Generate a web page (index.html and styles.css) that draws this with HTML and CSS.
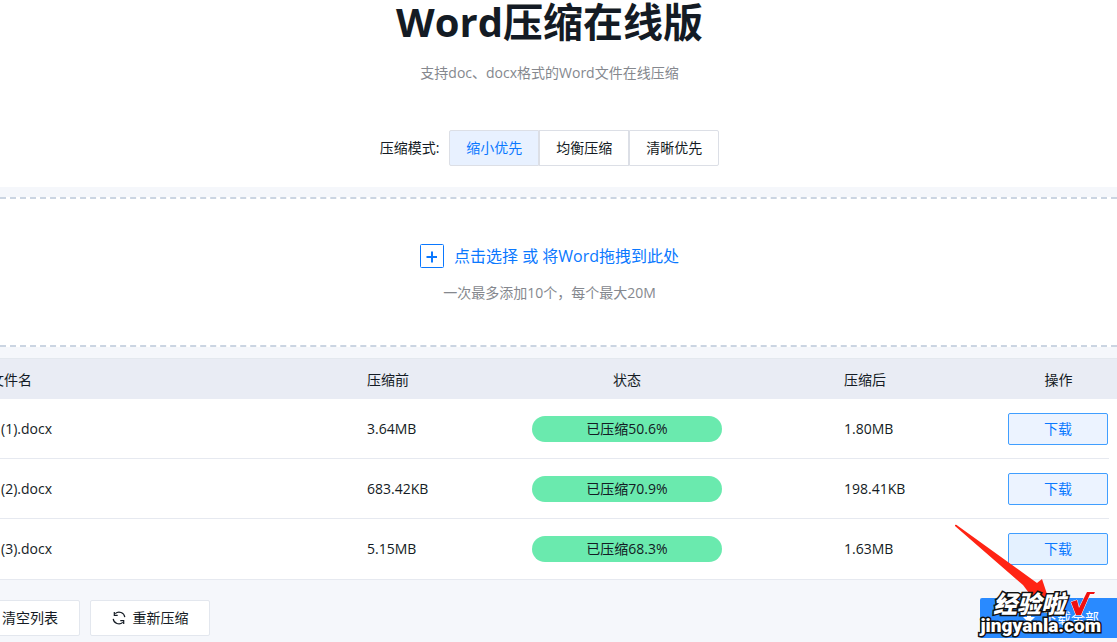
FILE: index.html
```html
<!DOCTYPE html>
<html lang="zh-CN">
<head>
<meta charset="utf-8">
<title>Word压缩在线版</title>
<link rel="stylesheet" href="styles.css">
</head>
<body>
<header class="hero">
  <h1 class="hero-title">Word压缩在线版</h1>
  <p class="hero-sub">支持doc、docx格式的Word文件在线压缩</p>
  <div class="modes" role="group" aria-labelledby="mode-label">
    <span id="mode-label" class="modes-label">压缩模式:</span>
    <div class="mode-group">
      <button type="button" class="mode mode-active" aria-pressed="true">缩小优先</button>
      <button type="button" class="mode" aria-pressed="false">均衡压缩</button>
      <button type="button" class="mode" aria-pressed="false">清晰优先</button>
    </div>
  </div>
</header>
<main>
  <section class="drop">
    <button type="button" class="drop-pick">
      <svg class="drop-icon" width="24" height="24" viewBox="0 0 24 24" fill="none" stroke="currentColor" aria-hidden="true"><rect x=".5" y=".5" width="23" height="23" rx="1"/><path d="M6.5 13h10.5M12 7.5v11" stroke-width="2"/></svg>
      <span>点击选择 或 将Word拖拽到此处</span>
    </button>
    <p class="drop-hint">一次最多添加10个，每个最大20M</p>
  </section>
  <table class="files">
    <colgroup><col><col class="col-before"><col class="col-status"><col class="col-after"><col class="col-action"><col class="col-gutter"></colgroup>
    <thead>
      <tr><th class="name">文件名</th><th>压缩前</th><th class="center">状态</th><th class="after">压缩后</th><th class="center">操作</th><td></td></tr>
    </thead>
    <tbody>
      <tr><td class="file">(1).docx</td><td>3.64MB</td><td><div class="pill">已压缩50.6%</div></td><td class="after">1.80MB</td><td><button type="button" class="download">下载</button></td><td class="gutter"></td></tr>
      <tr><td class="file">(2).docx</td><td>683.42KB</td><td><div class="pill">已压缩70.9%</div></td><td class="after">198.41KB</td><td><button type="button" class="download">下载</button></td><td class="gutter"></td></tr>
      <tr><td class="file">(3).docx</td><td>5.15MB</td><td><div class="pill">已压缩68.3%</div></td><td class="after">1.63MB</td><td><button type="button" class="download download-hover">下载</button></td><td class="gutter"></td></tr>
    </tbody>
  </table>
</main>
<footer class="actions">
  <button type="button" class="btn btn-clear">清空列表</button>
  <button type="button" class="btn btn-redo">
    <svg width="14" height="14" viewBox="0 0 14 14" fill="none" stroke="currentColor" stroke-width="1.2" aria-hidden="true"><path d="M1.2 7.8A5.8 5.8 0 0 0 10.8 11.4M12.8 6.2A5.8 5.8 0 0 0 3.2 2.6M2.3 1v3.3h3.4M11.7 13V9.7H8.3"/></svg>
    <span>重新压缩</span>
  </button>
  <button type="button" class="btn-all">
    <svg width="14" height="14" viewBox="0 0 14 14" fill="currentColor" aria-hidden="true"><path d="M5 1h4v5h4l-6 6-6-6h4z"/></svg>
    <span>下载全部</span>
  </button>
  <svg class="arrow" width="100" height="80" viewBox="0 0 100 80" aria-hidden="true"><path fill="#ff2414" d="M4 4Q5 3 7 5L86 62 91 58 98 79H76L78 72 72 64 4 5z"/></svg>
  <div class="mark">
    <div class="mark-top">
      <span class="mark-cn">经验啦</span>
      <svg class="mark-tick" width="26" height="26" viewBox="0 0 26 26" aria-hidden="true"><path fill="#f01010" stroke="#fff" stroke-width="1" d="M1 12l6-2 2 8L17 2h8l-1 2h-4L11 25H6z"/></svg>
    </div>
    <div class="mark-url">jingyanla.com</div>
  </div>
</footer>
</body>
</html>
```
FILE: styles.css
```css
* { box-sizing: border-box; }
body {
  margin: 0;
  background: #f5f7fb;
  color: #141b24;
  font: 14px/20px "Open Sans", "Noto Sans CJK SC", sans-serif;
}
button { font: inherit; color: inherit; cursor: pointer; margin: 0; padding: 0; }
h1, p { margin: 0; }

.hero {
  display: flex;
  flex-direction: column;
  align-items: center;
  padding: 0 18px 21px 0;
  background: #fff;
}
.hero-title { font-size: 40px; line-height: 44px; font-weight: 700; }
.hero-sub { margin-top: 19px; color: #85888e; }
.modes { display: flex; align-items: center; gap: 10px; margin-top: 47px; }
.mode-group { display: flex; }
.mode {
  width: 90px;
  height: 36px;
  border: 1px solid #dcdfe6;
  background: #fff;
}
.mode:first-child { border-radius: 2px 0 0 2px; }
.mode:last-child { border-radius: 0 2px 2px 0; }
.mode-active { background: #e8f1ff; color: #0a78ff; }

.drop {
  display: flex;
  flex-direction: column;
  align-items: center;
  margin: 10px 0 11px;
  padding: 45px 18px 42px 0;
  border: 2px dashed #cbd5e2;
  border-width: 2px 0;
  background: #fff;
}
.drop-pick {
  display: flex;
  align-items: center;
  gap: 10px;
  border: 0;
  background: none;
  color: #0a78ff;
  font-size: 16px;
  line-height: 24px;
}
.drop-hint { margin-top: 15px; color: #85888e; }

.files {
  width: 100%;
  table-layout: fixed;
  border-collapse: separate;
  border-spacing: 0;
  background: #fff;
}
.col-before { width: 165px; }
.col-status { width: 190px; }
.col-after { width: 286px; }
.col-action { width: 101px; }
.col-gutter { width: 8px; }
.files th, .files td { padding: 0; text-align: left; font-weight: 400; white-space: nowrap; }
.files thead th, .files thead td { height: 41px; padding-top: 2px; background: #e9ecf4; border-top: 1px solid #e3e8ee; }
.files tbody td { height: 60px; border-bottom: 1px solid #e6e9f0; }
.files tbody tr:last-child td { height: 61px; border-bottom: 1px solid #e6e9f0; }
.files tbody .gutter { border-bottom: 0; }
.files .name { text-indent: -10px; }
.files .file { padding-left: 1px; }
.files .center { text-align: center; }
.files .after { padding-left: 122px; }
.pill { height: 26px; border-radius: 13px; background: #6aeaae; line-height: 26px; text-align: center; }
.download {
  display: block;
  width: 100px;
  height: 32px;
  border: 1px solid #409eff;
  border-radius: 2px;
  background: #ecf3ff;
  color: #0a78ff;
}
.download-hover { background: #e4f1ff; }

.actions {
  position: relative;
  display: flex;
  align-items: center;
  gap: 10px;
  padding: 18px 0 4px;
}
.btn {
  display: flex;
  align-items: center;
  justify-content: center;
  gap: 7px;
  height: 36px;
  border: 1px solid #e3e7ee;
  border-radius: 2px;
  background: #fff;
}
.btn-clear { width: 100px; margin-left: -20px; }
.btn-redo { width: 120px; }
.btn-all {
  display: flex;
  align-items: center;
  gap: 7px;
  width: 137px;
  height: 40px;
  margin-left: auto;
  padding-left: 42px;
  border: 0;
  border-radius: 2px 0 0 2px;
  background: #298aff;
  color: #fff;
}
.arrow { position: absolute; right: 66px; top: -59px; }
.mark {
  position: absolute;
  right: 16px;
  top: 10px;
  color: #fff;
  font-weight: 900;
  -webkit-text-stroke: 3px #111;
  paint-order: stroke fill;
}
.mark-top { display: flex; align-items: center; justify-content: flex-end; gap: 5px; padding-right: 5px; }
.mark-cn { font: italic 900 24px/26px "Noto Sans CJK SC", sans-serif; }
.mark-url { font: 900 19px/20px Roboto, sans-serif; text-align: right; }
```
